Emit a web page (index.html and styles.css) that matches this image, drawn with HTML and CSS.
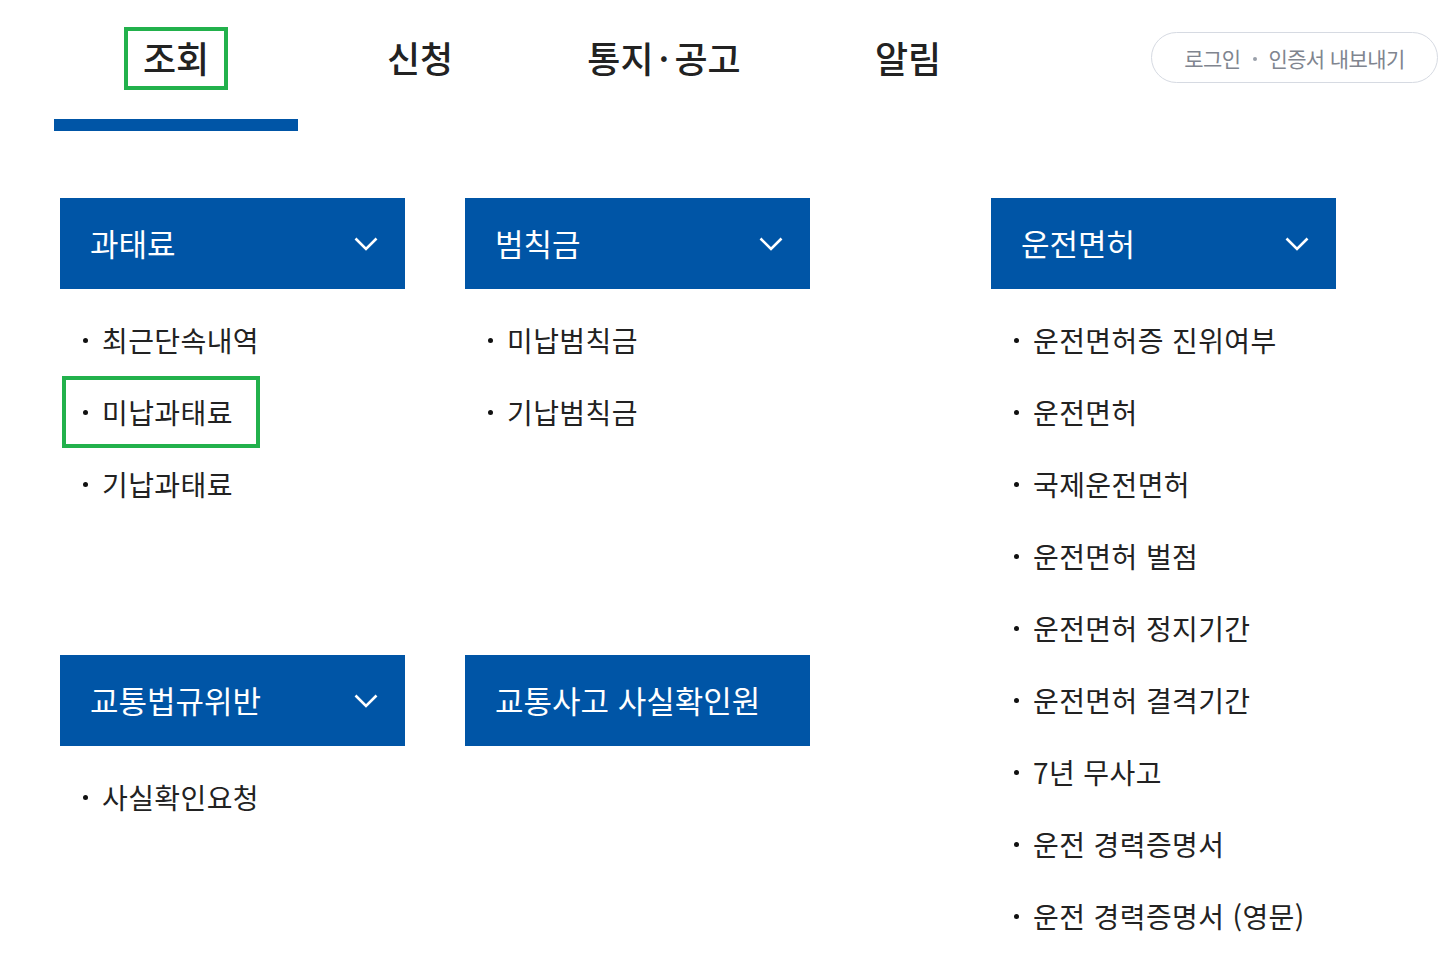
FILE: index.html
```html
<!DOCTYPE html>
<html lang="ko">
<head>
<meta charset="utf-8">
<title>메뉴</title>
<link rel="stylesheet" href="styles.css">
</head>
<body>
<header class="top">
  <nav class="tabs">
    <a class="tab active"><span class="tab-label marked">조회</span></a>
    <a class="tab"><span class="tab-label">신청</span></a>
    <a class="tab"><span class="tab-label">통지<span class="mid">·</span>공고</span></a>
    <a class="tab"><span class="tab-label">알림</span></a>
  </nav>
  <a class="login">로그인<span class="login-dot"></span>인증서 내보내기</a>
</header>

<main class="menu">
  <div class="left-grid">
    <section class="group">
      <div class="group-head"><span>과태료</span><svg class="chev" viewBox="0 0 24 14" width="24" height="14"><path d="M1.5 1.5 L12 12 L22.5 1.5" fill="none" stroke="#fff" stroke-width="2.6"/></svg></div>
      <ul class="items">
        <li><a class="item">최근단속내역</a></li>
        <li><a class="item marked">미납과태료</a></li>
        <li><a class="item">기납과태료</a></li>
      </ul>
    </section>
    <section class="group">
      <div class="group-head"><span>범칙금</span><svg class="chev" viewBox="0 0 24 14" width="24" height="14"><path d="M1.5 1.5 L12 12 L22.5 1.5" fill="none" stroke="#fff" stroke-width="2.6"/></svg></div>
      <ul class="items">
        <li><a class="item">미납범칙금</a></li>
        <li><a class="item">기납범칙금</a></li>
      </ul>
    </section>
    <section class="group">
      <div class="group-head"><span>교통법규위반</span><svg class="chev" viewBox="0 0 24 14" width="24" height="14"><path d="M1.5 1.5 L12 12 L22.5 1.5" fill="none" stroke="#fff" stroke-width="2.6"/></svg></div>
      <ul class="items">
        <li><a class="item">사실확인요청</a></li>
      </ul>
    </section>
    <section class="group">
      <div class="group-head"><span>교통사고 사실확인원</span></div>
    </section>
  </div>

  <section class="group right">
    <div class="group-head"><span>운전면허</span><svg class="chev" viewBox="0 0 24 14" width="24" height="14"><path d="M1.5 1.5 L12 12 L22.5 1.5" fill="none" stroke="#fff" stroke-width="2.6"/></svg></div>
    <ul class="items">
      <li><a class="item">운전면허증 진위여부</a></li>
      <li><a class="item">운전면허</a></li>
      <li><a class="item">국제운전면허</a></li>
      <li><a class="item">운전면허 벌점</a></li>
      <li><a class="item">운전면허 정지기간</a></li>
      <li><a class="item">운전면허 결격기간</a></li>
      <li><a class="item">7년 무사고</a></li>
      <li><a class="item">운전 경력증명서</a></li>
      <li><a class="item">운전 경력증명서 (영문)</a></li>
    </ul>
  </section>
</main>
</body>
</html>
```

FILE: styles.css
```css
* { box-sizing: border-box; }
html, body { margin: 0; padding: 0; background: #fff; }
body {
  font-family: "Noto Sans CJK KR", "Noto Sans", sans-serif;
  color: #222;
  width: 1450px;
}
a { color: inherit; text-decoration: none; }
ul { list-style: none; margin: 0; padding: 0; }

.top {
  display: flex;
  justify-content: space-between;
  align-items: flex-start;
  padding-left: 54px;
  padding-right: 12px;
}
.tabs { display: flex; }
.tab {
  width: 244px;
  height: 131px;
  display: flex;
  flex-direction: column;
  align-items: center;
  padding-top: 27px;
  border-bottom: 12px solid transparent;
}
.tab.active { border-bottom-color: #0055a6; }
.tab-label {
  display: inline-flex;
  align-items: center;
  justify-content: center;
  height: 63px;
  padding: 0 12px 3px;
  border: 4px solid transparent;
  font-size: 36px;
  font-weight: 500;
  color: #222;
  line-height: 1;
  white-space: nowrap;
}
.tab-label .mid { margin: 0 5px; }
.tab-label.marked { border-color: #22b14c; width: 104px; }

.login {
  margin-top: 32px;
  width: 287px;
  height: 51px;
  border: 1px solid #d6dae2;
  border-radius: 26px;
  display: flex;
  align-items: center;
  justify-content: center;
  padding-top: 1px;
  font-size: 21px;
  color: #80858f;
  letter-spacing: -0.6px;
  white-space: nowrap;
}
.login-dot {
  width: 4px;
  height: 4px;
  border-radius: 50%;
  background: #9aa0aa;
  margin: 2px 11px 0 13px;
  flex: none;
}

.menu {
  display: flex;
  align-items: flex-start;
  padding-left: 60px;
  margin-top: 67px;
}
.left-grid {
  display: grid;
  grid-template-columns: 345px 345px;
  column-gap: 60px;
  row-gap: 135px;
}
.group { width: 345px; }
.group.right { margin-left: 181px; }

.group-head {
  height: 91px;
  background: #0055a6;
  color: #fff;
  display: flex;
  align-items: center;
  justify-content: space-between;
  padding: 0 27px 0 30px;
  font-size: 31px;
  font-weight: 400;
  white-space: nowrap;
}
.group-head span { margin-top: -3px; }
.chev { display: block; margin-top: 0; }

.items { padding-top: 15px; }
.item {
  display: inline-flex;
  align-items: center;
  height: 72px;
  margin-left: 2px;
  padding: 0 23px 0 17px;
  border: 4px solid transparent;
  font-size: 28px;
  letter-spacing: 0.4px;
  color: #222;
  line-height: 1;
  white-space: nowrap;
}
.item::before {
  content: "";
  width: 5px;
  height: 5px;
  border-radius: 50%;
  background: #111;
  margin-right: 14px;
  flex: none;
}
.item.marked { border-color: #22b14c; }
```
